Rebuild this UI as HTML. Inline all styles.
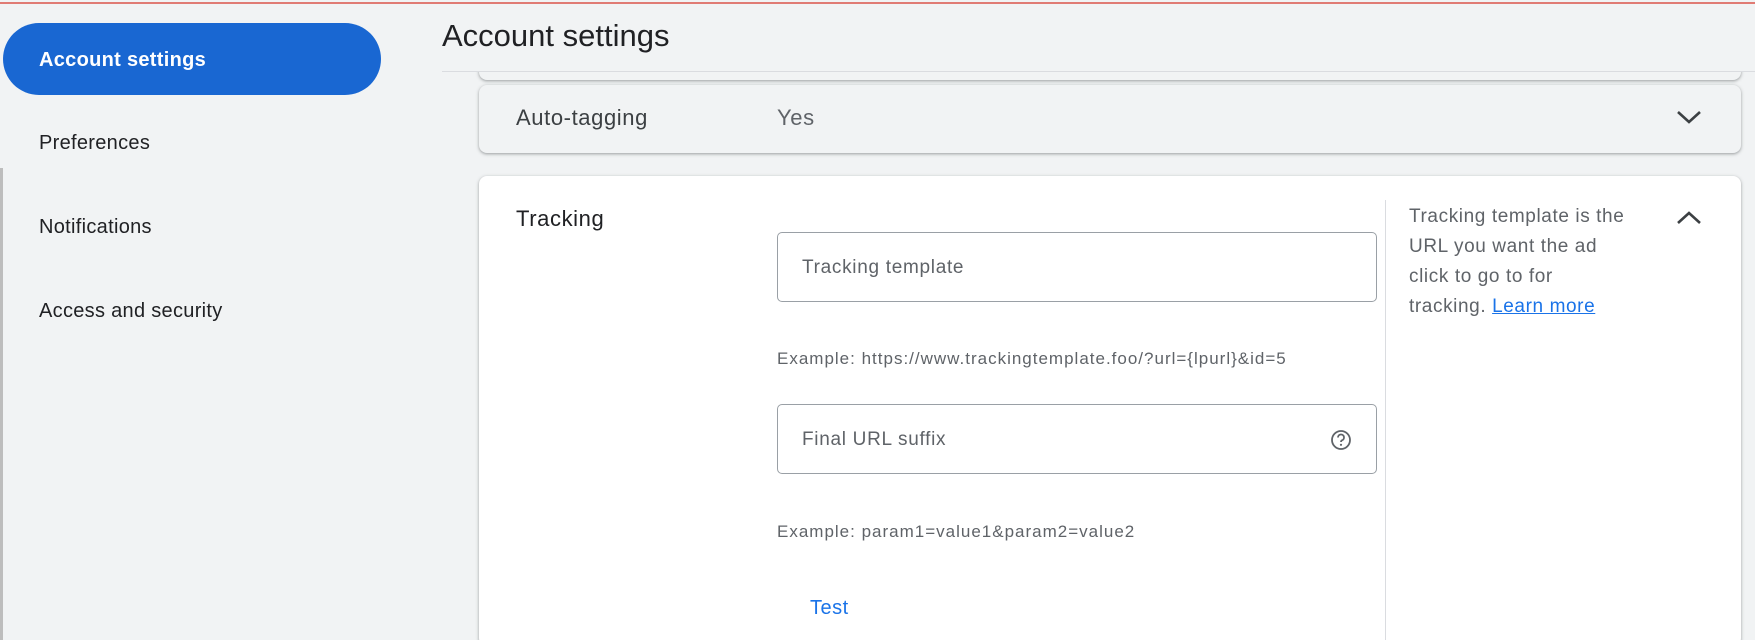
<!DOCTYPE html>
<html style="overflow:hidden;height:640px"><head><style>
*{margin:0;padding:0;box-sizing:border-box}
body{width:1755px;height:640px;overflow:hidden;background:#f1f3f4;font-family:"Liberation Sans",Arial,sans-serif;position:relative;color:#202124}
.abs{position:absolute}
.red{left:0;top:2px;width:1755px;height:2px;background:#e07b74}
.pill{left:3px;top:23px;width:378px;height:72px;background:#1967d2;border-radius:36px}
.nav{left:39px;font-size:20px;color:#202124;line-height:24px;letter-spacing:0.3px}
.card{background:#f1f3f4;border-radius:8px;box-shadow:0 1px 2px rgba(60,64,67,.3),0 1px 3px 1px rgba(60,64,67,.15)}
.inp{left:777px;width:600px;border:1px solid #9aa0a6;border-radius:5px;background:#fff}
.ph{position:absolute;left:24px;font-size:19px;color:#5f6368;letter-spacing:0.7px}
.ex{left:777px;font-size:17px;color:#5f6368;letter-spacing:1px}
</style></head><body>
<div class="abs card" style="left:479px;top:-20px;width:1262px;height:100px"></div>
<div class="abs" style="left:380px;top:0;width:1375px;height:71px;background:#f1f3f4"></div>
<div class="abs red"></div>
<div class="abs" style="left:0;top:168px;width:3px;height:472px;background:#bdbdbd"></div>
<div class="abs pill"></div>
<div class="abs nav" style="top:48px;color:#fff;font-weight:bold">Account settings</div>
<div class="abs nav" style="top:131px">Preferences</div>
<div class="abs nav" style="top:215px">Notifications</div>
<div class="abs nav" style="top:299px">Access and security</div>
<div class="abs" style="left:442px;top:18px;font-size:31px;color:#202124">Account settings</div>
<div class="abs" style="left:442px;top:71px;width:1313px;height:1px;background:#dadce0"></div>
<div class="abs card" style="left:479px;top:85px;width:1262px;height:68px">
<div class="abs" style="left:37px;top:20px;font-size:22px;color:#3c4043;letter-spacing:0.6px">Auto-tagging</div>
<div class="abs" style="left:298px;top:20px;font-size:22px;color:#5f6368;letter-spacing:0.6px">Yes</div>
<svg class="abs" style="left:1195px;top:22px" width="30" height="20" viewBox="0 0 30 20"><path d="M4 5 L15 15 L26 5" stroke="#3c4043" stroke-width="2.6" fill="none"/></svg>
</div>
<div class="abs card" style="left:479px;top:176px;width:1262px;height:470px;background:#fff">
<div class="abs" style="left:37px;top:30px;font-size:22px;color:#202124;letter-spacing:0.6px">Tracking</div>
<div class="abs" style="left:906px;top:24px;width:1px;height:460px;background:#dadce0"></div>
<div class="abs" style="left:930px;top:26px;font-size:19px;line-height:30px;color:#5f6368;width:226px;letter-spacing:0.6px">Tracking template is the URL you want the ad click to go to for tracking. <span style="color:#1a73e8;text-decoration:underline">Learn more</span></div>
<svg class="abs" style="left:1195px;top:32px" width="30" height="20" viewBox="0 0 30 20"><path d="M4 15 L15 5 L26 15" stroke="#3c4043" stroke-width="2.6" fill="none"/></svg>
</div>
<div class="abs inp" style="top:232px;height:70px"><div class="ph" style="top:24px">Tracking template</div></div>
<div class="abs ex" style="top:349px">Example: https://www.trackingtemplate.foo/?url={lpurl}&amp;id=5</div>
<div class="abs inp" style="top:404px;height:70px"><div class="ph" style="top:24px">Final URL suffix</div>
<svg class="abs" style="left:552px;top:24px" width="22" height="22" viewBox="0 0 22 22"><circle cx="11" cy="11" r="9" stroke="#5f6368" stroke-width="1.8" fill="none"/><path d="M8 8.5a3 3 0 1 1 4 2.8c-.8.4-1 .9-1 1.7" stroke="#5f6368" stroke-width="1.8" fill="none"/><circle cx="11" cy="15.8" r="1.1" fill="#5f6368"/></svg>
</div>
<div class="abs ex" style="top:522px">Example: param1=value1&amp;param2=value2</div>
<div class="abs" style="left:810px;top:597px;font-size:20px;color:#1a73e8;letter-spacing:0.5px">Test</div>
</body></html>
